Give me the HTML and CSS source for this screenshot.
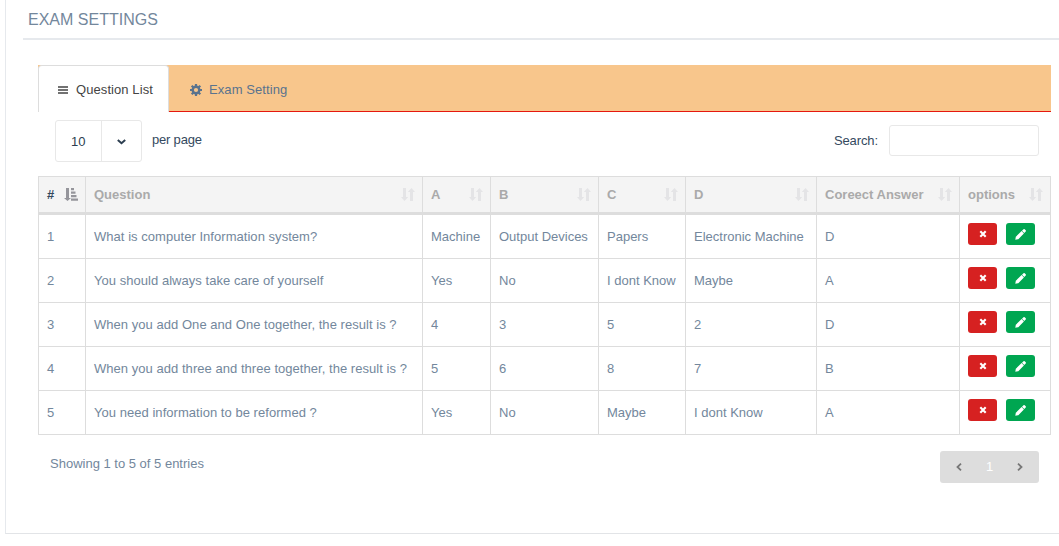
FILE: index.html
```html
<!DOCTYPE html>
<html lang="en">
<head>
<meta charset="utf-8">
<title>Exam Settings</title>
<link rel="stylesheet" href="styles.css">
</head>
<body>
<svg class="defs" width="0" height="0">
  <symbol id="sort" viewBox="0 0 14 13"><path d="M2 0h3v9h2.200L3.500 13 0 9h2zM9 13V4H6.800l3.700-4L14 4h-2v9z"/></symbol>
  <symbol id="sort-asc" viewBox="0 0 14 13"><path d="M2 0h3v10h2l-3.500 3L0 10h2zM7 0h3v2.300H7zM7 3.500h4.500v2.300H7zM7 7h5.500v2.300H7zM7 10.500h7v2.300H7z"/></symbol>
  <symbol id="close" viewBox="0 0 8 8"><path d="M1.300 1.300l5.400 5.400M6.700 1.300L1.300 6.700" stroke="#fff" stroke-width="2.100"/></symbol>
  <symbol id="pencil" viewBox="0 0 11 11"><path d="M7 1.700L8.500.3q.6-.5 1.200 0l1 1q.5.600 0 1.200L9.300 4zM6.600 2.100l2.300 2.300L3.300 10.200.3 10.700.8 7.800z" fill="#fff"/></symbol>
</svg>
<main class="panel">
  <h1 class="title">EXAM SETTINGS</h1>
  <nav class="tabs">
    <a class="tab active"><svg width="10" height="8" viewBox="0 0 10 8"><path d="M0 1h10M0 4h10M0 7h10" stroke="currentColor" stroke-width="1.300"/></svg>Question List</a>
    <a class="tab"><svg width="12" height="12" viewBox="0 0 12 12"><circle cx="6" cy="6" r="3.300" fill="none" stroke="currentColor" stroke-width="2.400"/><path d="M6 0v2.500M6 9.500V12M0 6h2.500M9.500 6H12M1.700 1.700l1.800 1.800M8.500 8.500l1.800 1.800M1.700 10.300l1.800-1.800M8.500 3.500l1.800-1.800" stroke="currentColor" stroke-width="2.200"/></svg>Exam Setting</a>
  </nav>
  <div class="controls">
    <div class="select"><span class="value">10</span><span class="arrow"><svg width="9" height="6" viewBox="0 0 9 6"><path d="M.8 1L4.500 4.200 8.200 1" fill="none" stroke="currentColor" stroke-width="2"/></svg></span></div>
    <span class="per-page">per page</span>
    <label class="search">Search:<input type="text"></label>
  </div>
  <table class="grid">
    <colgroup><col class="c-num"><col class="c-question"><col class="c-a"><col class="c-b"><col class="c-c"><col class="c-d"><col class="c-answer"><col class="c-options"></colgroup>
    <thead><tr>
      <th class="sorted"><div>#<svg width="14" height="13"><use href="#sort-asc"/></svg></div></th>
      <th><div>Question<svg width="14" height="13"><use href="#sort"/></svg></div></th>
      <th><div>A<svg width="14" height="13"><use href="#sort"/></svg></div></th>
      <th><div>B<svg width="14" height="13"><use href="#sort"/></svg></div></th>
      <th><div>C<svg width="14" height="13"><use href="#sort"/></svg></div></th>
      <th><div>D<svg width="14" height="13"><use href="#sort"/></svg></div></th>
      <th><div>Coreect Answer<svg width="14" height="13"><use href="#sort"/></svg></div></th>
      <th><div>options<svg width="14" height="13"><use href="#sort"/></svg></div></th>
    </tr></thead>
    <tbody>
      <tr><td>1</td><td class="question">What is computer Information system?</td><td>Machine</td><td>Output Devices</td><td>Papers</td><td>Electronic Machine</td><td>D</td><td class="options"><div><span class="btn red"><svg width="8" height="8"><use href="#close"/></svg></span><span class="btn green"><svg width="11" height="11"><use href="#pencil"/></svg></span></div></td></tr>
      <tr><td>2</td><td class="question">You should always take care of yourself</td><td>Yes</td><td>No</td><td>I dont Know</td><td>Maybe</td><td>A</td><td class="options"><div><span class="btn red"><svg width="8" height="8"><use href="#close"/></svg></span><span class="btn green"><svg width="11" height="11"><use href="#pencil"/></svg></span></div></td></tr>
      <tr><td>3</td><td class="question">When you add One and One together, the result is ?</td><td>4</td><td>3</td><td>5</td><td>2</td><td>D</td><td class="options"><div><span class="btn red"><svg width="8" height="8"><use href="#close"/></svg></span><span class="btn green"><svg width="11" height="11"><use href="#pencil"/></svg></span></div></td></tr>
      <tr><td>4</td><td class="question">When you add three and three together, the result is ?</td><td>5</td><td>6</td><td>8</td><td>7</td><td>B</td><td class="options"><div><span class="btn red"><svg width="8" height="8"><use href="#close"/></svg></span><span class="btn green"><svg width="11" height="11"><use href="#pencil"/></svg></span></div></td></tr>
      <tr><td>5</td><td class="question">You need information to be reformed ?</td><td>Yes</td><td>No</td><td>Maybe</td><td>I dont Know</td><td>A</td><td class="options"><div><span class="btn red"><svg width="8" height="8"><use href="#close"/></svg></span><span class="btn green"><svg width="11" height="11"><use href="#pencil"/></svg></span></div></td></tr>
    </tbody>
  </table>
  <footer class="footer">
    <span class="info">Showing 1 to 5 of 5 entries</span>
    <div class="pager">
      <svg width="6" height="8" viewBox="0 0 6 8"><path d="M5 .7L1.500 4 5 7.300" fill="none" stroke="#777" stroke-width="1.800"/></svg>
      <span>1</span>
      <svg width="6" height="8" viewBox="0 0 6 8"><path d="M1 .7L4.500 4 1 7.300" fill="none" stroke="#777" stroke-width="1.800"/></svg>
    </div>
  </footer>
</main>
</body>
</html>
```
FILE: styles.css
```css
* { box-sizing: border-box; }
body { margin: 0; background: #fff; font: 13px/20px "Liberation Sans", Arial, sans-serif; color: #73879c; overflow: hidden; }
svg { display: block; flex: none; }
.defs { position: absolute; }
.panel { margin-left: 5px; height: 534px; border-left: 1px solid #e6e9ed; border-bottom: 1px solid #e2e4e7; }
.title { margin: 0 0 0 17px; height: 40px; padding: 9px 5px 0; border-bottom: 2px solid #e6e9ed; font-size: 16px; line-height: 22px; font-weight: 400; }
.tabs { display: flex; width: 1013px; height: 47px; margin: 25px 0 0 32px; background: #f8c68c; border-bottom: 1px solid #e5180f; }
.tab { display: flex; align-items: center; height: 46px; padding: 3px 0 0 21px; color: #5a738e; letter-spacing: .08px; }
.tab svg { margin-right: 7px; }
.tab.active { width: 131px; height: 47px; padding: 1px 0 0 19px; color: #444; background: #fff; border: 1px solid #ddd; border-bottom: 0; border-radius: 4px 4px 0 0; }
.tab.active svg { margin-right: 8px; }
.controls { display: flex; align-items: flex-start; width: 1033px; height: 64px; padding: 8px 0 0 49px; color: #34495e; }
.select { display: flex; width: 87px; height: 42px; border: 1px solid #e8e8e8; border-radius: 3px; color: #2c3e50; }
.value { width: 45px; padding-left: 15px; line-height: 41px; }
.arrow { display: grid; place-items: center; width: 40px; padding-top: 2px; border-left: 1px solid #e8e8e8; }
.per-page { margin: 10px 0 0 10px; letter-spacing: -.2px; }
.search { display: flex; align-items: center; gap: 11px; margin: 5px 0 0 auto; letter-spacing: -.1px; }
.search input { width: 150px; height: 31px; border: 1px solid #e8e8e8; border-radius: 3px; padding: 0 8px; }
.grid { width: 1013px; margin-left: 32px; table-layout: fixed; border-collapse: separate; border-spacing: 0; border: solid #ddd; border-width: 1px 0 0 1px; }
.c-num { width: 47px; }
.c-question { width: 337px; }
.c-a { width: 68px; }
.c-b { width: 108px; }
.c-c { width: 87px; }
.c-d { width: 131px; }
.c-answer { width: 143px; }
.c-options { width: 91px; }
th { height: 38px; padding: 0 7px 0 8px; background: #f4f4f4; border-right: 1px solid #ddd; border-bottom: 3px solid #ddd; text-align: left; color: #aaa; white-space: nowrap; }
th div { display: flex; align-items: center; justify-content: space-between; }
th svg { fill: #e4e4e6; }
.sorted { color: #34495e; }
.sorted svg { fill: #95959b; }
td { height: 44px; padding: 0 0 0 8px; border-right: 1px solid #ddd; border-bottom: 1px solid #ddd; white-space: nowrap; }
.question { letter-spacing: .04px; }
.options { vertical-align: top; padding-top: 8px; }
.options div { display: flex; gap: 9px; }
.btn { display: grid; place-items: center; width: 29px; height: 22px; border-radius: 3px; }
.red { background: #d62121; }
.green { background: #00a651; }
.footer { display: flex; justify-content: space-between; width: 1033px; padding: 16px 0 0 44px; }
.info { padding-top: 3px; }
.pager { display: flex; align-items: center; justify-content: space-between; width: 99px; height: 32px; padding: 0 16px; border-radius: 3px; background: #ddd; color: #fff; }
```
